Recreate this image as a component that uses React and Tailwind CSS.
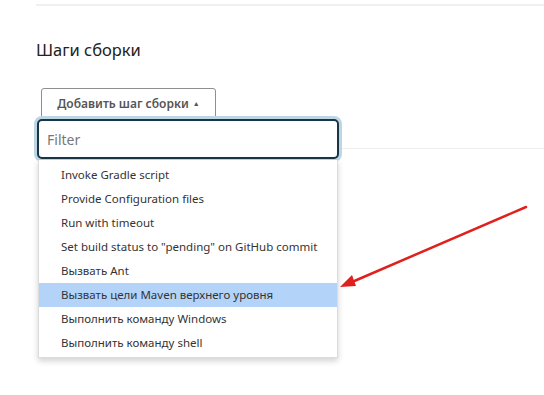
const items = [
  "Invoke Gradle script",
  "Provide Configuration files",
  "Run with timeout",
  'Set build status to "pending" on GitHub commit',
  "Вызвать Ant",
  "Вызвать цели Maven верхнего уровня",
  "Выполнить команду Windows",
  "Выполнить команду shell",
];

function App() {
  return (
    <div
      className="relative w-[544px] h-[395px] bg-white overflow-hidden text-[#333]"
      style={{ fontFamily: '"Noto Sans", "Open Sans", sans-serif' }}
    >
      {/* верхняя линия */}
      <div className="ml-[36px] mt-[4px] h-[2px] bg-[#f0f0f0]" />

      {/* ЗАГОЛОВОК */}
      <h2 className="ml-[36px] mt-[32px] text-[16.5px] leading-[24px] text-[#222]">Шаги сборки</h2>

      {/* КНОПКА */}
      <div className="ml-[41px] mt-[26px] w-[175px] h-[31px] border border-[#8f8f8f] rounded-[3px] flex items-center justify-center gap-1 text-[12px] font-semibold text-[#555]">
        Добавить шаг сборки
        <span className="text-[7px] leading-none mb-[1px]">▲</span>
      </div>

      {/* линия секции */}
      <div className="ml-[36px] mt-[29px] h-px bg-[#eeeeee]" />

      {/* ВЫПАДАЮЩЕЕ МЕНЮ */}
      <div className="absolute left-[34px] top-[116px] w-[308px]">
        <div className="rounded-[8px] bg-[#bcd6e5] p-[3px]">
          <div className="h-[40px] rounded-[5px] border-2 border-[#183445] bg-white flex items-center px-[8px] text-[14px] text-[#777]">
            Filter
          </div>
        </div>
        <div className="-mt-[2px] ml-[4px] w-[300px] bg-white border-l border-r border-b border-[#dcdcdc] shadow-[0_3px_6px_rgba(0,0,0,0.18)] pt-[3px] pb-[2px]">
          {items.map((t, i) => (
            <div
              key={i}
              className={
                "h-[24px] flex items-center pl-[22px] text-[11.5px] text-[#333] " +
                (i === 5 ? "bg-[#b3d3f8]" : "")
              }
            >
              {t}
            </div>
          ))}
        </div>
      </div>

      {/* СТРЕЛКА */}
      <svg className="absolute left-0 top-0" width="544" height="395">
        <line x1="526" y1="207" x2="352" y2="282" stroke="#e0201c" strokeWidth="2.5" strokeLinecap="round" />
        <polygon points="340,287 352,275 356,286" fill="#e0201c" />
      </svg>
    </div>
  );
}

export default App;
